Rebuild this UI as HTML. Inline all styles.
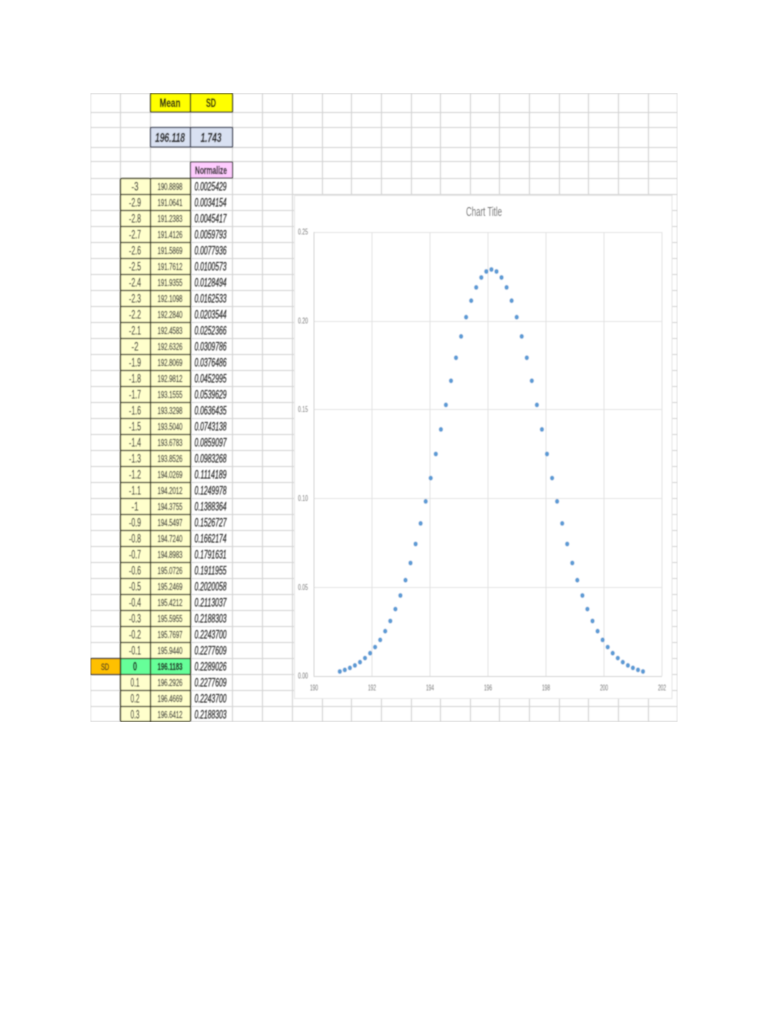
<!DOCTYPE html>
<html><head><meta charset="utf-8"><title>Normal distribution</title>
<style>html,body{margin:0;padding:0;background:#fff}svg{display:block}text{font-family:"Liberation Sans",sans-serif}.t text{stroke:#333;stroke-width:.22px}ellipse{rx:2.1px;ry:2.4px}</style></head>
<body>
<svg width="768" height="1024" viewBox="0 0 768 1024" xmlns="http://www.w3.org/2000/svg">
<defs><filter id="b" x="0" y="0" width="100%" height="100%"><feGaussianBlur stdDeviation="0.42"/></filter></defs>
<rect width="768" height="1024" fill="#fff"/>
<g filter="url(#b)">
<!-- sheet grid -->
<path fill="none" stroke="#d4d4d4" stroke-width="1.1" d="M91 93.5H677M91 112.5H677M91 127.5H677M91 147.5H677M91 161.5H677M91 178.5H677M91 194.5H677M91 210.5H677M91 226.5H677M91 242.5H677M91 258.5H677M91 274.5H677M91 290.5H677M91 306.5H677M91 322.5H677M91 338.5H677M91 354.5H677M91 370.5H677M91 386.5H677M91 402.5H677M91 418.5H677M91 434.5H677M91 450.5H677M91 466.5H677M91 482.5H677M91 498.5H677M91 514.5H677M91 530.5H677M91 546.5H677M91 562.5H677M91 578.5H677M91 594.5H677M91 610.5H677M91 626.5H677M91 642.5H677M91 658.5H677M91 674.5H677M91 690.5H677M91 706.5H677M91 721.5H677M90.5 93V722M120.5 93V722M150.5 93V722M190.5 93V722M232.5 93V722M262.5 93V722M292.5 93V722M322.5 93V722M351.5 93V722M381.5 93V722M411.5 93V722M440.5 93V722M470.5 93V722M499.5 93V722M529.5 93V722M559.5 93V722M588.5 93V722M618.5 93V722M648.5 93V722M677.5 93V722"/>
<!-- header cells -->
<g stroke="#3a3a1a" stroke-width="1.2">
<rect x="150.5" y="93.5" width="40" height="18.5" fill="#ffff00"/>
<rect x="190.5" y="93.5" width="42" height="18.5" fill="#ffff00"/>
</g>
<g stroke="#3c4356" stroke-width="1.2">
<rect x="150.5" y="127.5" width="40" height="19.5" fill="#d9e1f2"/>
<rect x="190.5" y="127.5" width="42" height="19.5" fill="#d9e1f2"/>
</g>
<rect x="190.5" y="162" width="42" height="16" fill="#ffccff" stroke="#3a3a3a" stroke-width="1.1"/>
<!-- table columns -->
<rect x="120.5" y="178.5" width="69.5" height="543" fill="#ffffcc"/>
<rect x="120.5" y="658.5" width="69.5" height="16" fill="#66ff99"/>
<rect x="90.5" y="658.5" width="30" height="16" fill="#ffc000" stroke="#333" stroke-width="1.2"/>
<path fill="none" stroke="#33331c" stroke-width="1.3" d="M120.5 178.5V721.5M150.5 178.5V721.5M190.5 178.5V721.5M120.5 721.5H190M120.5 178.5H190M120.5 194.5H190M120.5 210.5H190M120.5 226.5H190M120.5 242.5H190M120.5 258.5H190M120.5 274.5H190M120.5 290.5H190M120.5 306.5H190M120.5 322.5H190M120.5 338.5H190M120.5 354.5H190M120.5 370.5H190M120.5 386.5H190M120.5 402.5H190M120.5 418.5H190M120.5 434.5H190M120.5 450.5H190M120.5 466.5H190M120.5 482.5H190M120.5 498.5H190M120.5 514.5H190M120.5 530.5H190M120.5 546.5H190M120.5 562.5H190M120.5 578.5H190M120.5 594.5H190M120.5 610.5H190M120.5 626.5H190M120.5 642.5H190M120.5 658.5H190M120.5 674.5H190M120.5 690.5H190M120.5 706.5H190"/>
<!-- header text -->
<g class="t" text-anchor="middle" fill="#1a1a00" font-weight="bold">
<text x="170" y="107" font-size="12" textLength="21" lengthAdjust="spacingAndGlyphs">Mean</text>
<text x="211" y="107" font-size="12" textLength="10" lengthAdjust="spacingAndGlyphs">SD</text>
<text x="170" y="142" font-size="13" font-style="italic" textLength="30" lengthAdjust="spacingAndGlyphs" fill="#222">196.118</text>
<text x="211" y="142" font-size="13" font-style="italic" textLength="21" lengthAdjust="spacingAndGlyphs" fill="#222">1.743</text>
<text x="211" y="174" font-size="11" textLength="32" lengthAdjust="spacingAndGlyphs" fill="#222">Normalize</text>
<text x="105" y="670" font-size="9" textLength="8" lengthAdjust="spacingAndGlyphs" font-weight="normal">SD</text>
</g>
<!-- column 1 -->
<g class="t" text-anchor="middle" fill="#333" font-size="12">
<text x="135" y="190.5" textLength="7" lengthAdjust="spacingAndGlyphs">-3</text>
<text x="135" y="206.5" textLength="12" lengthAdjust="spacingAndGlyphs">-2.9</text>
<text x="135" y="222.5" textLength="12" lengthAdjust="spacingAndGlyphs">-2.8</text>
<text x="135" y="238.5" textLength="12" lengthAdjust="spacingAndGlyphs">-2.7</text>
<text x="135" y="254.5" textLength="12" lengthAdjust="spacingAndGlyphs">-2.6</text>
<text x="135" y="270.5" textLength="12" lengthAdjust="spacingAndGlyphs">-2.5</text>
<text x="135" y="286.5" textLength="12" lengthAdjust="spacingAndGlyphs">-2.4</text>
<text x="135" y="302.5" textLength="12" lengthAdjust="spacingAndGlyphs">-2.3</text>
<text x="135" y="318.5" textLength="12" lengthAdjust="spacingAndGlyphs">-2.2</text>
<text x="135" y="334.5" textLength="12" lengthAdjust="spacingAndGlyphs">-2.1</text>
<text x="135" y="350.5" textLength="7" lengthAdjust="spacingAndGlyphs">-2</text>
<text x="135" y="366.5" textLength="12" lengthAdjust="spacingAndGlyphs">-1.9</text>
<text x="135" y="382.5" textLength="12" lengthAdjust="spacingAndGlyphs">-1.8</text>
<text x="135" y="398.5" textLength="12" lengthAdjust="spacingAndGlyphs">-1.7</text>
<text x="135" y="414.5" textLength="12" lengthAdjust="spacingAndGlyphs">-1.6</text>
<text x="135" y="430.5" textLength="12" lengthAdjust="spacingAndGlyphs">-1.5</text>
<text x="135" y="446.5" textLength="12" lengthAdjust="spacingAndGlyphs">-1.4</text>
<text x="135" y="462.5" textLength="12" lengthAdjust="spacingAndGlyphs">-1.3</text>
<text x="135" y="478.5" textLength="12" lengthAdjust="spacingAndGlyphs">-1.2</text>
<text x="135" y="494.5" textLength="12" lengthAdjust="spacingAndGlyphs">-1.1</text>
<text x="135" y="510.5" textLength="7" lengthAdjust="spacingAndGlyphs">-1</text>
<text x="135" y="526.5" textLength="12" lengthAdjust="spacingAndGlyphs">-0.9</text>
<text x="135" y="542.5" textLength="12" lengthAdjust="spacingAndGlyphs">-0.8</text>
<text x="135" y="558.5" textLength="12" lengthAdjust="spacingAndGlyphs">-0.7</text>
<text x="135" y="574.5" textLength="12" lengthAdjust="spacingAndGlyphs">-0.6</text>
<text x="135" y="590.5" textLength="12" lengthAdjust="spacingAndGlyphs">-0.5</text>
<text x="135" y="606.5" textLength="12" lengthAdjust="spacingAndGlyphs">-0.4</text>
<text x="135" y="622.5" textLength="12" lengthAdjust="spacingAndGlyphs">-0.3</text>
<text x="135" y="638.5" textLength="12" lengthAdjust="spacingAndGlyphs">-0.2</text>
<text x="135" y="654.5" textLength="12" lengthAdjust="spacingAndGlyphs">-0.1</text>
<text x="135" y="670.5" textLength="4" lengthAdjust="spacingAndGlyphs" font-weight="bold" fill="#111">0</text>
<text x="135" y="686.5" textLength="9" lengthAdjust="spacingAndGlyphs">0.1</text>
<text x="135" y="702.5" textLength="9" lengthAdjust="spacingAndGlyphs">0.2</text>
<text x="135" y="718.5" textLength="9" lengthAdjust="spacingAndGlyphs">0.3</text>
</g>
<!-- column 2 -->
<g class="t" text-anchor="middle" fill="#333" font-size="10">
<text x="170" y="190" textLength="25" lengthAdjust="spacingAndGlyphs">190.8898</text>
<text x="170" y="206" textLength="25" lengthAdjust="spacingAndGlyphs">191.0641</text>
<text x="170" y="222" textLength="25" lengthAdjust="spacingAndGlyphs">191.2383</text>
<text x="170" y="238" textLength="25" lengthAdjust="spacingAndGlyphs">191.4126</text>
<text x="170" y="254" textLength="25" lengthAdjust="spacingAndGlyphs">191.5869</text>
<text x="170" y="270" textLength="25" lengthAdjust="spacingAndGlyphs">191.7612</text>
<text x="170" y="286" textLength="25" lengthAdjust="spacingAndGlyphs">191.9355</text>
<text x="170" y="302" textLength="25" lengthAdjust="spacingAndGlyphs">192.1098</text>
<text x="170" y="318" textLength="25" lengthAdjust="spacingAndGlyphs">192.2840</text>
<text x="170" y="334" textLength="25" lengthAdjust="spacingAndGlyphs">192.4583</text>
<text x="170" y="350" textLength="25" lengthAdjust="spacingAndGlyphs">192.6326</text>
<text x="170" y="366" textLength="25" lengthAdjust="spacingAndGlyphs">192.8069</text>
<text x="170" y="382" textLength="25" lengthAdjust="spacingAndGlyphs">192.9812</text>
<text x="170" y="398" textLength="25" lengthAdjust="spacingAndGlyphs">193.1555</text>
<text x="170" y="414" textLength="25" lengthAdjust="spacingAndGlyphs">193.3298</text>
<text x="170" y="430" textLength="25" lengthAdjust="spacingAndGlyphs">193.5040</text>
<text x="170" y="446" textLength="25" lengthAdjust="spacingAndGlyphs">193.6783</text>
<text x="170" y="462" textLength="25" lengthAdjust="spacingAndGlyphs">193.8526</text>
<text x="170" y="478" textLength="25" lengthAdjust="spacingAndGlyphs">194.0269</text>
<text x="170" y="494" textLength="25" lengthAdjust="spacingAndGlyphs">194.2012</text>
<text x="170" y="510" textLength="25" lengthAdjust="spacingAndGlyphs">194.3755</text>
<text x="170" y="526" textLength="25" lengthAdjust="spacingAndGlyphs">194.5497</text>
<text x="170" y="542" textLength="25" lengthAdjust="spacingAndGlyphs">194.7240</text>
<text x="170" y="558" textLength="25" lengthAdjust="spacingAndGlyphs">194.8983</text>
<text x="170" y="574" textLength="25" lengthAdjust="spacingAndGlyphs">195.0726</text>
<text x="170" y="590" textLength="25" lengthAdjust="spacingAndGlyphs">195.2469</text>
<text x="170" y="606" textLength="25" lengthAdjust="spacingAndGlyphs">195.4212</text>
<text x="170" y="622" textLength="25" lengthAdjust="spacingAndGlyphs">195.5955</text>
<text x="170" y="638" textLength="25" lengthAdjust="spacingAndGlyphs">195.7697</text>
<text x="170" y="654" textLength="25" lengthAdjust="spacingAndGlyphs">195.9440</text>
<text x="170" y="670" textLength="25" lengthAdjust="spacingAndGlyphs" font-weight="bold" fill="#111">196.1183</text>
<text x="170" y="686" textLength="25" lengthAdjust="spacingAndGlyphs">196.2926</text>
<text x="170" y="702" textLength="25" lengthAdjust="spacingAndGlyphs">196.4669</text>
<text x="170" y="718" textLength="25" lengthAdjust="spacingAndGlyphs">196.6412</text>
</g>
<!-- column 3 -->
<g class="t" text-anchor="middle" fill="#222" font-size="12" font-style="italic">
<text x="210.5" y="190.5" textLength="32" lengthAdjust="spacingAndGlyphs">0.0025429</text>
<text x="210.5" y="206.5" textLength="32" lengthAdjust="spacingAndGlyphs">0.0034154</text>
<text x="210.5" y="222.5" textLength="32" lengthAdjust="spacingAndGlyphs">0.0045417</text>
<text x="210.5" y="238.5" textLength="32" lengthAdjust="spacingAndGlyphs">0.0059793</text>
<text x="210.5" y="254.5" textLength="32" lengthAdjust="spacingAndGlyphs">0.0077936</text>
<text x="210.5" y="270.5" textLength="32" lengthAdjust="spacingAndGlyphs">0.0100573</text>
<text x="210.5" y="286.5" textLength="32" lengthAdjust="spacingAndGlyphs">0.0128494</text>
<text x="210.5" y="302.5" textLength="32" lengthAdjust="spacingAndGlyphs">0.0162533</text>
<text x="210.5" y="318.5" textLength="32" lengthAdjust="spacingAndGlyphs">0.0203544</text>
<text x="210.5" y="334.5" textLength="32" lengthAdjust="spacingAndGlyphs">0.0252366</text>
<text x="210.5" y="350.5" textLength="32" lengthAdjust="spacingAndGlyphs">0.0309786</text>
<text x="210.5" y="366.5" textLength="32" lengthAdjust="spacingAndGlyphs">0.0376486</text>
<text x="210.5" y="382.5" textLength="32" lengthAdjust="spacingAndGlyphs">0.0452995</text>
<text x="210.5" y="398.5" textLength="32" lengthAdjust="spacingAndGlyphs">0.0539629</text>
<text x="210.5" y="414.5" textLength="32" lengthAdjust="spacingAndGlyphs">0.0636435</text>
<text x="210.5" y="430.5" textLength="32" lengthAdjust="spacingAndGlyphs">0.0743138</text>
<text x="210.5" y="446.5" textLength="32" lengthAdjust="spacingAndGlyphs">0.0859097</text>
<text x="210.5" y="462.5" textLength="32" lengthAdjust="spacingAndGlyphs">0.0983268</text>
<text x="210.5" y="478.5" textLength="32" lengthAdjust="spacingAndGlyphs">0.1114189</text>
<text x="210.5" y="494.5" textLength="32" lengthAdjust="spacingAndGlyphs">0.1249978</text>
<text x="210.5" y="510.5" textLength="32" lengthAdjust="spacingAndGlyphs">0.1388364</text>
<text x="210.5" y="526.5" textLength="32" lengthAdjust="spacingAndGlyphs">0.1526727</text>
<text x="210.5" y="542.5" textLength="32" lengthAdjust="spacingAndGlyphs">0.1662174</text>
<text x="210.5" y="558.5" textLength="32" lengthAdjust="spacingAndGlyphs">0.1791631</text>
<text x="210.5" y="574.5" textLength="32" lengthAdjust="spacingAndGlyphs">0.1911955</text>
<text x="210.5" y="590.5" textLength="32" lengthAdjust="spacingAndGlyphs">0.2020058</text>
<text x="210.5" y="606.5" textLength="32" lengthAdjust="spacingAndGlyphs">0.2113037</text>
<text x="210.5" y="622.5" textLength="32" lengthAdjust="spacingAndGlyphs">0.2188303</text>
<text x="210.5" y="638.5" textLength="32" lengthAdjust="spacingAndGlyphs">0.2243700</text>
<text x="210.5" y="654.5" textLength="32" lengthAdjust="spacingAndGlyphs">0.2277609</text>
<text x="210.5" y="670.5" textLength="32" lengthAdjust="spacingAndGlyphs">0.2289026</text>
<text x="210.5" y="686.5" textLength="32" lengthAdjust="spacingAndGlyphs">0.2277609</text>
<text x="210.5" y="702.5" textLength="32" lengthAdjust="spacingAndGlyphs">0.2243700</text>
<text x="210.5" y="718.5" textLength="32" lengthAdjust="spacingAndGlyphs">0.2188303</text>
</g>
<!-- chart -->
<rect x="294.5" y="195.5" width="377.5" height="503" fill="#fff" stroke="#e6e6e6" stroke-width="1"/>
<path fill="none" stroke="#e4e4e4" stroke-width="1" d="M314 232.5H662M314 321.5H662M314 409.5H662M314 498.5H662M314 587.5H662M372 232V676M430 232V676M488 232V676M546 232V676M604 232V676M662 232V676"/>
<path fill="none" stroke="#d4d4d4" stroke-width="1" d="M314 232V676.5H662"/>
<text x="484" y="216" font-size="13" text-anchor="middle" fill="#595959" textLength="36" lengthAdjust="spacingAndGlyphs">Chart Title</text>
<g font-size="8" fill="#595959" text-anchor="middle">
<text x="303" y="234.5" textLength="10" lengthAdjust="spacingAndGlyphs">0.25</text>
<text x="303" y="323.5" textLength="10" lengthAdjust="spacingAndGlyphs">0.20</text>
<text x="303" y="412" textLength="10" lengthAdjust="spacingAndGlyphs">0.15</text>
<text x="303" y="501" textLength="10" lengthAdjust="spacingAndGlyphs">0.10</text>
<text x="303" y="590" textLength="10" lengthAdjust="spacingAndGlyphs">0.05</text>
<text x="303" y="678.5" textLength="10" lengthAdjust="spacingAndGlyphs">0.00</text>
<text x="314" y="690.5" textLength="8" lengthAdjust="spacingAndGlyphs">190</text>
<text x="372" y="690.5" textLength="8" lengthAdjust="spacingAndGlyphs">192</text>
<text x="430" y="690.5" textLength="8" lengthAdjust="spacingAndGlyphs">194</text>
<text x="488" y="690.5" textLength="8" lengthAdjust="spacingAndGlyphs">196</text>
<text x="546" y="690.5" textLength="8" lengthAdjust="spacingAndGlyphs">198</text>
<text x="604" y="690.5" textLength="8" lengthAdjust="spacingAndGlyphs">200</text>
<text x="662" y="690.5" textLength="8" lengthAdjust="spacingAndGlyphs">202</text>
</g>
<g fill="#5b9bd5">
<ellipse cx="339.8" cy="671.5"/><ellipse cx="344.8" cy="669.9"/><ellipse cx="349.9" cy="667.9"/><ellipse cx="354.9" cy="665.4"/><ellipse cx="360" cy="662.2"/><ellipse cx="365" cy="658.1"/><ellipse cx="370.1" cy="653.2"/><ellipse cx="375.1" cy="647.1"/><ellipse cx="380.2" cy="639.9"/><ellipse cx="385.2" cy="631.2"/>
<ellipse cx="390.3" cy="621"/><ellipse cx="395.4" cy="609.1"/><ellipse cx="400.4" cy="595.5"/><ellipse cx="405.5" cy="580.2"/><ellipse cx="410.5" cy="563"/><ellipse cx="415.6" cy="544"/><ellipse cx="420.6" cy="523.4"/><ellipse cx="425.7" cy="501.4"/><ellipse cx="430.7" cy="478.1"/><ellipse cx="435.8" cy="454"/>
<ellipse cx="440.9" cy="429.4"/><ellipse cx="445.9" cy="404.9"/><ellipse cx="451" cy="380.8"/><ellipse cx="456" cy="357.8"/><ellipse cx="461.1" cy="336.4"/><ellipse cx="466.1" cy="317.2"/><ellipse cx="471.2" cy="300.7"/><ellipse cx="476.2" cy="287.4"/><ellipse cx="481.3" cy="277.5"/><ellipse cx="486.3" cy="271.5"/>
<ellipse cx="491.4" cy="269.5"/>
<ellipse cx="496.5" cy="271.5"/><ellipse cx="501.5" cy="277.5"/><ellipse cx="506.6" cy="287.4"/><ellipse cx="511.6" cy="300.7"/><ellipse cx="516.7" cy="317.2"/><ellipse cx="521.7" cy="336.4"/><ellipse cx="526.8" cy="357.8"/><ellipse cx="531.8" cy="380.8"/><ellipse cx="536.9" cy="404.9"/><ellipse cx="541.9" cy="429.4"/>
<ellipse cx="547" cy="454"/><ellipse cx="552.1" cy="478.1"/><ellipse cx="557.1" cy="501.4"/><ellipse cx="562.2" cy="523.4"/><ellipse cx="567.2" cy="544"/><ellipse cx="572.3" cy="563"/><ellipse cx="577.3" cy="580.2"/><ellipse cx="582.4" cy="595.5"/><ellipse cx="587.4" cy="609.1"/><ellipse cx="592.5" cy="621"/>
<ellipse cx="597.6" cy="631.2"/><ellipse cx="602.6" cy="639.9"/><ellipse cx="607.7" cy="647.1"/><ellipse cx="612.7" cy="653.2"/><ellipse cx="617.8" cy="658.1"/><ellipse cx="622.8" cy="662.2"/><ellipse cx="627.9" cy="665.4"/><ellipse cx="632.9" cy="667.9"/><ellipse cx="638" cy="669.9"/><ellipse cx="643" cy="671.5"/>
</g>
</g>
</svg>
</body></html>
